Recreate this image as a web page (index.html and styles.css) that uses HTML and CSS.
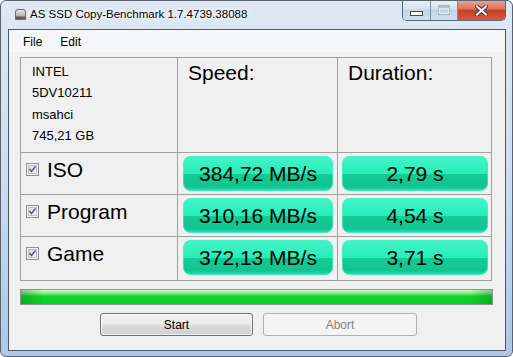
FILE: index.html
```html
<!DOCTYPE html>
<html lang="en">
<head>
    <meta charset="UTF-8">
    <meta name="viewport" content="width=device-width, initial-scale=1.0">
    <title>AS SSD Copy-Benchmark 1.7.4739.38088</title>
    <link rel="stylesheet" href="styles.css">
</head>

<body>
    <div class="window">
        <div class="titlebar">
            <svg class="app-icon" width="13" height="13" viewBox="0 0 13 13">
                <defs>
                    <linearGradient id="hdd" x1="0" y1="0" x2="0" y2="1">
                        <stop offset="0" stop-color="#e8e8e8"/>
                        <stop offset="1" stop-color="#9a9a9a"/>
                    </linearGradient>
                </defs>
                <path d="M1.5 4 Q1.5 1.5 4 1.5 H9 Q11.5 1.5 11.5 4 V11.5 H1.5 Z" fill="url(#hdd)" stroke="#6a6a6a"/>
                <rect x="2" y="8.5" width="9" height="2.5" fill="#5c5c5c"/>
                <rect x="9" y="9.2" width="1.4" height="1.2" fill="#4b7bd8"/>
            </svg>
            <span class="title">AS SSD Copy-Benchmark 1.7.4739.38088</span>
            <div class="caption-buttons">
                <div class="cap-btn cap-min"><span class="min-glyph"></span></div>
                <div class="cap-btn cap-max"><span class="max-glyph"></span></div>
                <div class="cap-btn cap-close">
                    <svg width="13" height="11" viewBox="0 0 13 11">
                        <path d="M2 1.5 L11 9.5 M11 1.5 L2 9.5" stroke="#3b3b3b" stroke-width="4" stroke-linecap="square"/>
                        <path d="M2 1.5 L11 9.5 M11 1.5 L2 9.5" stroke="#fff" stroke-width="2" stroke-linecap="square"/>
                    </svg>
                </div>
            </div>
        </div>

        <div class="client">
            <div class="menubar">
                <span class="menu-item">File</span>
                <span class="menu-item">Edit</span>
            </div>

            <div class="bench-grid">
                <div class="cell drive-info">
                    <div>INTEL</div>
                    <div>5DV10211</div>
                    <div>msahci</div>
                    <div>745,21 GB</div>
                </div>
                <div class="cell head">Speed:</div>
                <div class="cell head">Duration:</div>

                <div class="cell test-name">
                    <svg class="check" width="13" height="13" viewBox="0 0 13 13"><use href="#checkbox"/></svg>
                    <span>ISO</span>
                </div>
                <div class="cell speed"><div class="led">384,72 MB/s</div></div>
                <div class="cell duration"><div class="led">2,79 s</div></div>

                <div class="cell test-name">
                    <svg class="check" width="13" height="13" viewBox="0 0 13 13"><use href="#checkbox"/></svg>
                    <span>Program</span>
                </div>
                <div class="cell speed"><div class="led">310,16 MB/s</div></div>
                <div class="cell duration"><div class="led">4,54 s</div></div>

                <div class="cell test-name">
                    <svg class="check" width="13" height="13" viewBox="0 0 13 13"><use href="#checkbox"/></svg>
                    <span>Game</span>
                </div>
                <div class="cell speed"><div class="led">372,13 MB/s</div></div>
                <div class="cell duration"><div class="led">3,71 s</div></div>
            </div>

            <div class="progress"></div>

            <div class="actions">
                <button class="btn">Start</button>
                <button class="btn" disabled>Abort</button>
            </div>
        </div>
    </div>

    <!-- checkbox glyph, reused in each row -->
    <svg width="0" height="0" style="position: absolute;">
        <defs>
            <linearGradient id="boxfill" x1="0" y1="0" x2="1" y2="1">
                <stop offset="0" stop-color="#d6d6d6"/>
                <stop offset="1" stop-color="#fbfbfb"/>
            </linearGradient>
            <g id="checkbox">
                <rect x="0.5" y="0.5" width="12" height="12" fill="#f4f4f4" stroke="#8e8f8f"/>
                <rect x="2.5" y="2.5" width="8" height="8" fill="url(#boxfill)" stroke="#c0c0c0"/>
                <path d="M3.5 6 L5.5 8.5 L9.5 3.5" fill="none" stroke="#4c5f8d" stroke-width="1.6"/>
            </g>
        </defs>
    </svg>
</body>
</html>
```

FILE: styles.css
```css
body {
    margin: 0;
    background-color: #fff;
    font-family: "Liberation Sans", Arial, sans-serif;
}

.window {
    width: 513px;
    height: 357px;
    box-sizing: border-box;
    border: 1px solid #5b636d;
    border-radius: 6px;
    background: linear-gradient(to bottom, #dfe8f3 0%, #cfdff0 45%, #aac8e8 100%);
    display: flex;
    flex-direction: column;
    overflow: hidden;
}

/* title bar */
.titlebar {
    height: 28px;
    display: flex;
    align-items: flex-start;
    padding-left: 13px;
    flex-shrink: 0;
}

.app-icon {
    margin-top: 7px;
}

.title {
    margin-left: 3px;
    margin-top: 6px;
    font-size: 11.5px;
    line-height: 15px;
    color: #000;
    text-shadow: 0 0 6px #fff, 0 0 3px #fff;
}

.caption-buttons {
    margin-left: auto;
    margin-right: 6px;
    margin-top: -1px;
    height: 20px;
    display: flex;
    border: 1px solid #59677a;
    border-top: none;
    border-radius: 0 0 5px 5px;
    overflow: hidden;
}

.cap-btn {
    height: 20px;
    display: flex;
    align-items: center;
    justify-content: center;
    box-sizing: border-box;
}

.cap-min,
.cap-max {
    width: 28px;
    border-right: 1px solid #7d8ca0;
    background: linear-gradient(to bottom, #e9f0f7 0%, #d7e3f0 45%, #c3d4e7 50%, #cddff0 100%);
}

.cap-max {
    width: 27px;
}

.cap-close {
    width: 47px;
    background: linear-gradient(to bottom, #e9ab99 0%, #d9725a 45%, #c63e22 50%, #d45a3c 100%);
}

.min-glyph {
    width: 11px;
    height: 3px;
    margin-top: 6px;
    background-color: #fff;
    border: 1px solid #4a4a4a;
}

.max-glyph {
    width: 10px;
    height: 8px;
    border: 1px solid #a9b4c1;
    box-shadow: inset 0 2px 0 #b9c4d0, inset 0 0 0 1px #e6edf4;
}

/* client area */
.client {
    flex: 1;
    margin: 0 6px 5px 7px;
    border: 1px solid #4e5966;
    background-color: #f0f0f0;
    display: flex;
    flex-direction: column;
}

.menubar {
    height: 20px;
    padding: 2px 0 0 5px;
    background-color: #f5f6f7;
    font-size: 12px;
    line-height: 20px;
    display: flex;
}

.menu-item {
    padding: 0 9px;
}

.bench-grid {
    margin: 5px 0 0 11px;
    width: 472px;
    box-sizing: border-box;
    display: grid;
    grid-template-columns: 156px 159px 153px;
    grid-template-rows: 94px 41px 41px 43px;
    gap: 1px;
    border: 1px solid #a0a0a0;
    background-color: #a0a0a0;
}

.cell {
    background-color: #f0f0f0;
    box-sizing: border-box;
}

.drive-info {
    padding: 3px 11px;
    font-size: 13px;
    line-height: 21.33px;
}

.head {
    padding: 3px 10px;
    font-size: 21px;
    line-height: 24px;
}

.test-name {
    padding: 5px 0 0 5px;
    display: flex;
    align-items: flex-start;
    gap: 8px;
    font-size: 21px;
    line-height: 24px;
}

.check {
    margin-top: 5px;
    flex-shrink: 0;
}

.speed {
    padding: 3px 4px 0 5px;
}

.duration {
    padding: 3px 3px 0 4px;
}

.led {
    height: 35px;
    border-radius: 8px;
    display: flex;
    align-items: center;
    justify-content: center;
    font-size: 21px;
    line-height: 24px;
    color: #000;
    background: linear-gradient(to bottom, #44f5c9 0%, #27edb9 50%, #14cb95 53%, #11c48f 88%, #34e2b4 100%);
    box-shadow: inset 0 0 0 1px rgba(80, 240, 200, 0.6);
}

/* progress bar */
.progress {
    margin: 8px 0 0 11px;
    width: 473px;
    height: 16px;
    box-sizing: border-box;
    border: 1px solid #8f9491;
    background:
        linear-gradient(to right, rgba(0, 110, 20, 0.35) 0, rgba(0, 110, 20, 0) 22px, rgba(0, 110, 20, 0) calc(100% - 22px), rgba(0, 110, 20, 0.35) 100%),
        linear-gradient(to bottom, #d2f7cc 0, #a6f0a0 2px, #6ee56c 4px, #12d62c 6px, #00d31f 100%);
}

/* buttons */
.actions {
    margin: 8px 0 0 91px;
    display: flex;
    gap: 10px;
}

.btn {
    width: 153px;
    height: 23px;
    padding: 0;
    border: 1px solid #707070;
    border-radius: 3px;
    font-family: "Liberation Sans", Arial, sans-serif;
    font-size: 12px;
    color: #000;
    background: linear-gradient(to bottom, #f3f3f3 0%, #ebebeb 48%, #dddddd 52%, #cfcfcf 100%);
    box-shadow: inset 0 0 0 1px rgba(255, 255, 255, 0.7);
}

.btn:disabled {
    width: 154px;
    border-color: #adb2b5;
    color: #838383;
    background: #f4f4f4;
    box-shadow: none;
}
```
